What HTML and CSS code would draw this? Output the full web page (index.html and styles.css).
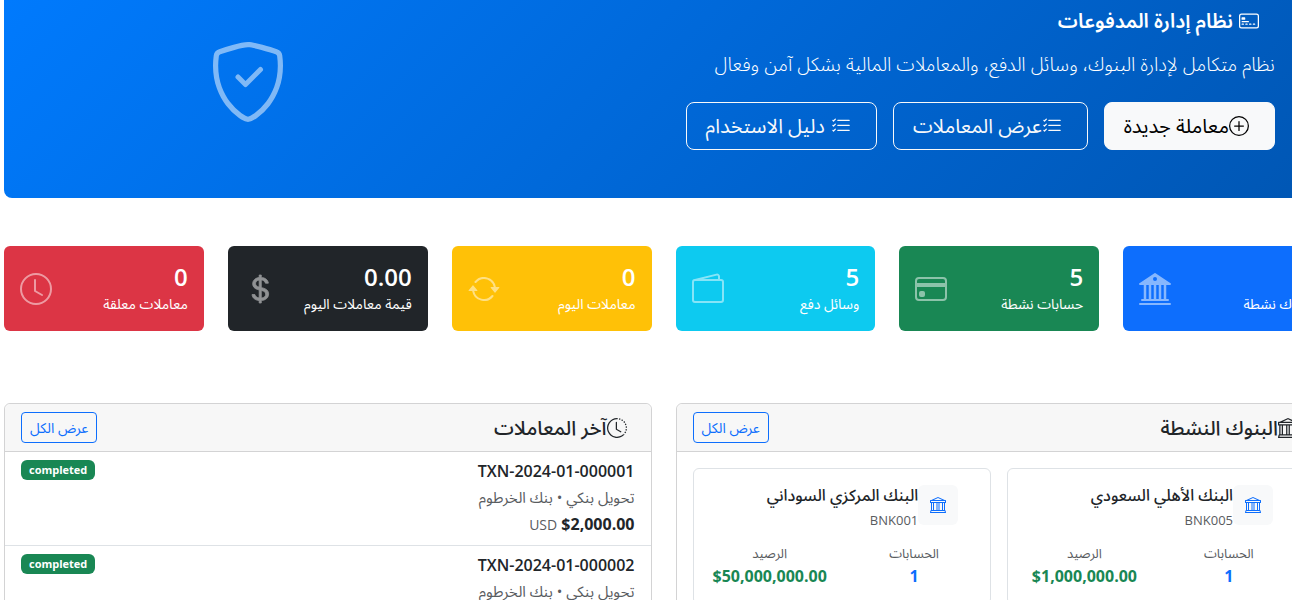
FILE: index.html
```html
<!DOCTYPE html>
<html lang="ar">
<head>
    <meta charset="UTF-8">
    <meta name="viewport" content="width=device-width, initial-scale=1.0">
    <title>نظام إدارة المدفوعات</title>
    <link rel="stylesheet" href="styles.css">
</head>
<body>
    <svg class="sprite" aria-hidden="true">
        <symbol id="card-front" viewBox="0 0 16 16">
            <path d="M14 3a1 1 0 0 1 1 1v8a1 1 0 0 1-1 1H2a1 1 0 0 1-1-1V4a1 1 0 0 1 1-1zM2 2a2 2 0 0 0-2 2v8a2 2 0 0 0 2 2h12a2 2 0 0 0 2-2V4a2 2 0 0 0-2-2z"/>
            <path d="M2 5.500a.5.5 0 0 1 .5-.5h2a.5.5 0 0 1 .5.5v1a.5.5 0 0 1-.5.5h-2a.5.5 0 0 1-.5-.5zm0 3a.5.5 0 0 1 .5-.5h5a.5.5 0 0 1 0 1h-5a.5.5 0 0 1-.5-.5m0 2a.5.5 0 0 1 .5-.5h1a.5.5 0 0 1 0 1h-1a.5.5 0 0 1-.5-.5m3 0a.5.5 0 0 1 .5-.5h1a.5.5 0 0 1 0 1h-1a.5.5 0 0 1-.5-.5m3 0a.5.5 0 0 1 .5-.5h1a.5.5 0 0 1 0 1h-1a.5.5 0 0 1-.5-.5m3 0a.5.5 0 0 1 .5-.5h1a.5.5 0 0 1 0 1h-1a.5.5 0 0 1-.5-.5"/>
        </symbol>
        <symbol id="plus-circle" viewBox="0 0 16 16">
            <path d="M8 15A7 7 0 1 1 8 1a7 7 0 0 1 0 14m0 1A8 8 0 1 0 8 0a8 8 0 0 0 0 16"/>
            <path d="M8 4a.5.5 0 0 1 .5.5v3h3a.5.5 0 0 1 0 1h-3v3a.5.5 0 0 1-1 0v-3h-3a.5.5 0 0 1 0-1h3v-3A.5.5 0 0 1 8 4"/>
        </symbol>
        <symbol id="list-check" viewBox="0 0 16 16">
            <path d="M5 11.500a.5.5 0 0 1 .5-.5h9a.5.5 0 0 1 0 1h-9a.5.5 0 0 1-.5-.5m0-4a.5.5 0 0 1 .5-.5h9a.5.5 0 0 1 0 1h-9a.5.5 0 0 1-.5-.5m0-4a.5.5 0 0 1 .5-.5h9a.5.5 0 0 1 0 1h-9a.5.5 0 0 1-.5-.5M3.854 2.146a.5.5 0 0 1 0 .708l-1.500 1.500a.5.5 0 0 1-.708 0l-.5-.5a.5.5 0 1 1 .708-.708L2 3.293l1.146-1.147a.5.5 0 0 1 .708 0m0 4a.5.5 0 0 1 0 .708l-1.500 1.500a.5.5 0 0 1-.708 0l-.5-.5a.5.5 0 1 1 .708-.708L2 7.293l1.146-1.147a.5.5 0 0 1 .708 0m0 4a.5.5 0 0 1 0 .708l-1.500 1.500a.5.5 0 0 1-.708 0l-.5-.5a.5.5 0 0 1 .708-.708l.146.147 1.146-1.147a.5.5 0 0 1 .708 0"/>
        </symbol>
        <symbol id="shield-check" viewBox="0 0 16 16">
            <path d="M5.338 1.590a61 61 0 0 0-2.837.856.480.480 0 0 0-.328.390c-.554 4.157.726 7.190 2.253 9.188a10.700 10.700 0 0 0 2.287 2.233c.346.244.652.420.893.533q.180.085.293.118a1 1 0 0 0 .101.025 1 1 0 0 0 .100-.025q.114-.034.294-.118c.240-.113.547-.290.893-.533a10.700 10.700 0 0 0 2.287-2.233c1.527-1.997 2.807-5.031 2.253-9.188a.480.480 0 0 0-.328-.390c-.651-.213-1.750-.560-2.837-.855C9.552 1.290 8.531 1.067 8 1.067c-.530 0-1.552.223-2.662.524zM5.072.560C6.157.265 7.310 0 8 0s1.843.265 2.928.560c1.110.300 2.229.655 2.887.870a1.540 1.540 0 0 1 1.044 1.262c.596 4.477-.787 7.795-2.465 9.990a11.800 11.800 0 0 1-2.517 2.453 7 7 0 0 1-1.048.625c-.280.132-.581.240-.829.240s-.548-.108-.829-.240a7 7 0 0 1-1.048-.625 11.800 11.800 0 0 1-2.517-2.453C1.928 10.487.545 7.169 1.141 2.692A1.540 1.540 0 0 1 2.185 1.430 63 63 0 0 1 5.072.560"/>
            <path d="M10.854 5.146a.5.5 0 0 1 0 .708l-3 3a.5.5 0 0 1-.708 0l-1.500-1.500a.5.5 0 1 1 .708-.708L7.500 7.793l2.646-2.647a.5.5 0 0 1 .708 0"/>
        </symbol>
        <symbol id="bank" viewBox="0 0 16 16">
            <path d="m8 0 6.610 3h.890a.5.5 0 0 1 .5.5v2a.5.5 0 0 1-.5.5H15v7a.5.5 0 0 1 .485.380l.5 2a.498.498 0 0 1-.485.620H.5a.498.498 0 0 1-.485-.620l.5-2A.5.5 0 0 1 1 13V6H.5a.5.5 0 0 1-.5-.5v-2A.5.5 0 0 1 .5 3h.890zM3.777 3h8.447L8 1zM2 6v7h1V6zm2 0v7h2.500V6zm3.500 0v7h1V6zm2 0v7H12V6zM13 6v7h1V6zm2-1V4H1v1zm-.390 9H1.390l-.250 1h13.720z"/>
        </symbol>
        <symbol id="bank-fill" viewBox="0 0 16 16">
            <path d="M8.277.084a.5.5 0 0 0-.554 0l-7.500 5A.5.5 0 0 0 .5 6h1.875v7H1.500a.5.5 0 0 0 0 1h13a.5.5 0 1 0 0-1h-.875V6H15.500a.5.5 0 0 0 .277-.916zM12.375 6v7h-1.250V6zm-2.500 0v7h-1.250V6zm-2.500 0v7h-1.250V6zm-2.500 0v7h-1.250V6zM8 4a1 1 0 1 1 0-2 1 1 0 0 1 0 2M.5 15a.5.5 0 0 0 0 1h15a.5.5 0 1 0 0-1z"/>
        </symbol>
        <symbol id="credit-card" viewBox="0 0 16 16">
            <path d="M0 4a2 2 0 0 1 2-2h12a2 2 0 0 1 2 2v8a2 2 0 0 1-2 2H2a2 2 0 0 1-2-2zm2-1a1 1 0 0 0-1 1v1h14V4a1 1 0 0 0-1-1zm13 4H1v5a1 1 0 0 0 1 1h12a1 1 0 0 0 1-1z"/>
            <path d="M2 10a1 1 0 0 1 1-1h1a1 1 0 0 1 1 1v1a1 1 0 0 1-1 1H3a1 1 0 0 1-1-1z"/>
        </symbol>
        <symbol id="wallet" viewBox="0 0 16 16">
            <path d="M12.136.326A1.500 1.500 0 0 1 14 1.780V3h.5A1.500 1.500 0 0 1 16 4.500v9a1.500 1.500 0 0 1-1.500 1.500h-13A1.500 1.500 0 0 1 0 13.500v-9a1.500 1.500 0 0 1 1.432-1.499zM5.562 3H13V1.780a.5.5 0 0 0-.621-.484zM1.500 4a.5.5 0 0 0-.5.5v9a.5.5 0 0 0 .5.5h13a.5.5 0 0 0 .5-.5v-9a.5.5 0 0 0-.5-.5z"/>
        </symbol>
        <symbol id="repeat" viewBox="0 0 16 16">
            <path d="M11.534 7h3.932a.250.250 0 0 1 .192.410l-1.966 2.360a.250.250 0 0 1-.384 0l-1.966-2.360a.250.250 0 0 1 .192-.410m-11 2h3.932a.250.250 0 0 0 .192-.410L2.692 6.230a.250.250 0 0 0-.384 0L.342 8.590A.250.250 0 0 0 .534 9"/>
            <path d="M8 3c-1.552 0-2.940.707-3.857 1.818a.5.5 0 1 1-.771-.636A6.002 6.002 0 0 1 13.917 7H12.900A5 5 0 0 0 8 3M3.100 9a5.002 5.002 0 0 0 8.757 2.182.5.5 0 1 1 .771.636A6.002 6.002 0 0 1 2.083 9z"/>
        </symbol>
        <symbol id="dollar" viewBox="0 0 16 16">
            <path stroke="currentColor" stroke-width="0.4" d="M4 10.781c.148 1.667 1.513 2.850 3.591 3.003V15h1.043v-1.216c2.270-.179 3.678-1.438 3.678-3.300 0-1.590-.947-2.510-2.956-3.028l-.722-.187V3.467c1.122.110 1.879.714 2.070 1.616h1.470c-.166-1.600-1.540-2.748-3.540-2.875V1H7.591v1.233c-1.939.230-3.270 1.472-3.270 3.156 0 1.454.966 2.483 2.661 2.917l.610.162v4.031c-1.149-.170-1.940-.800-2.131-1.718zm3.391-3.836c-1.043-.263-1.600-.825-1.600-1.616 0-.944.704-1.641 1.800-1.828v3.495l-.2-.050zm1.591 1.872c1.287.323 1.852.859 1.852 1.769 0 1.097-.826 1.828-2.200 1.939V8.730z"/>
        </symbol>
        <symbol id="clock" viewBox="0 0 16 16">
            <path d="M8 3.500a.5.5 0 0 0-1 0V9a.5.5 0 0 0 .252.434l3.500 2a.5.5 0 0 0 .496-.868L8 8.710z"/>
            <path d="M8 16A8 8 0 1 0 8 0a8 8 0 0 0 0 16m7-8A7 7 0 1 1 1 8a7 7 0 0 1 14 0"/>
        </symbol>
        <symbol id="clock-history" viewBox="0 0 16 16">
            <path d="M8.515 1.019A7 7 0 0 0 8 1V0a8 8 0 0 1 .589.022zm2.004.450a7 7 0 0 0-.985-.299l.219-.976q.576.129 1.126.342zm1.370.710a7 7 0 0 0-.439-.270l.493-.870a8 8 0 0 1 .979.654l-.615.789a7 7 0 0 0-.418-.302zm1.834 1.790a7 7 0 0 0-.653-.796l.724-.690q.406.429.747.910zm.744 1.352a7 7 0 0 0-.214-.468l.893-.450a8 8 0 0 1 .450 1.088l-.950.313a7 7 0 0 0-.179-.483m.530 2.507a7 7 0 0 0-.100-1.025l.985-.170q.100.580.116 1.170zm-.131 1.538q.050-.254.081-.510l.993.123a8 8 0 0 1-.230 1.155l-.964-.267q.069-.247.120-.501m-.952 2.379q.276-.436.486-.908l.914.405q-.240.540-.555 1.038zm-.964 1.205q.183-.183.350-.378l.758.653a8 8 0 0 1-.401.432z"/>
            <path d="M8 1a7 7 0 1 0 4.950 11.950l.707.707A8.001 8.001 0 1 1 8 0z"/>
            <path d="M7.500 3a.5.5 0 0 1 .5.5v5.210l3.248 1.856a.5.5 0 0 1-.496.868l-3.500-2A.5.5 0 0 1 7 9V3.500a.5.5 0 0 1 .5-.5"/>
        </symbol>
    </svg>

    <div class="page">
        <section class="hero">
            <div class="hero-text">
                <h1><svg class="icon"><use href="#card-front"/></svg> <span>نظام إدارة المدفوعات</span></h1>
                <p>نظام متكامل لإدارة البنوك، وسائل الدفع، والمعاملات المالية بشكل آمن وفعال</p>
                <div class="hero-actions">
                    <a href="#new" class="btn btn-light"><svg class="icon"><use href="#plus-circle"/></svg>معاملة جديدة</a>
                    <a href="#transactions" class="btn btn-outline"><svg class="icon"><use href="#list-check"/></svg>عرض المعاملات</a>
                    <a href="#guide" class="btn btn-outline btn-guide"><svg class="icon"><use href="#list-check"/></svg>دليل الاستخدام</a>
                </div>
            </div>
            <div class="hero-icon">
                <svg><use href="#shield-check"/></svg>
            </div>
        </section>

        <section class="stats">
            <div class="stat blue">
                <div><h2>5</h2><p>بنوك نشطة</p></div>
                <svg><use href="#bank-fill"/></svg>
            </div>
            <div class="stat green">
                <div><h2>5</h2><p>حسابات نشطة</p></div>
                <svg><use href="#credit-card"/></svg>
            </div>
            <div class="stat cyan">
                <div><h2>5</h2><p>وسائل دفع</p></div>
                <svg><use href="#wallet"/></svg>
            </div>
            <div class="stat yellow">
                <div><h2>0</h2><p>معاملات اليوم</p></div>
                <svg><use href="#repeat"/></svg>
            </div>
            <div class="stat dark">
                <div><h2>0.00</h2><p>قيمة معاملات اليوم</p></div>
                <svg><use href="#dollar"/></svg>
            </div>
            <div class="stat red">
                <div><h2>0</h2><p>معاملات معلقة</p></div>
                <svg><use href="#clock"/></svg>
            </div>
        </section>

        <div class="panels">
            <section class="panel">
                <header class="panel-header">
                    <h2><svg class="icon"><use href="#bank"/></svg>البنوك النشطة</h2>
                    <a href="#banks" class="btn-small">عرض الكل</a>
                </header>
                <div class="banks">
                    <article class="bank">
                        <div class="bank-head">
                            <span class="bank-icon"><svg><use href="#bank"/></svg></span>
                            <div>
                                <h3>البنك الأهلي السعودي</h3>
                                <small>BNK005</small>
                            </div>
                        </div>
                        <div class="bank-stats">
                            <div><small>الحسابات</small><strong class="count">1</strong></div>
                            <div><small>الرصيد</small><strong class="balance" dir="ltr">$1,000,000.00</strong></div>
                        </div>
                    </article>
                    <article class="bank">
                        <div class="bank-head">
                            <span class="bank-icon"><svg><use href="#bank"/></svg></span>
                            <div>
                                <h3>البنك المركزي السوداني</h3>
                                <small>BNK001</small>
                            </div>
                        </div>
                        <div class="bank-stats">
                            <div><small>الحسابات</small><strong class="count">1</strong></div>
                            <div><small>الرصيد</small><strong class="balance" dir="ltr">$50,000,000.00</strong></div>
                        </div>
                    </article>
                </div>
            </section>

            <section class="panel">
                <header class="panel-header">
                    <h2><svg class="icon"><use href="#clock-history"/></svg>آخر المعاملات</h2>
                    <a href="#transactions" class="btn-small">عرض الكل</a>
                </header>
                <ul class="transactions">
                    <li>
                        <div class="transaction">
                            <h3>TXN-2024-01-000001</h3>
                            <p>تحويل بنكي • بنك الخرطوم</p>
                            <div class="amount"><strong dir="ltr">$2,000.00</strong> <small>USD</small></div>
                        </div>
                        <span class="badge">completed</span>
                    </li>
                    <li>
                        <div class="transaction">
                            <h3>TXN-2024-01-000002</h3>
                            <p>تحويل بنكي • بنك الخرطوم</p>
                        </div>
                        <span class="badge">completed</span>
                    </li>
                </ul>
            </section>
        </div>
    </div>
</body>
</html>
```

FILE: styles.css
```css
* {
    box-sizing: border-box;
}
html {
    overflow: hidden;
}
body {
    font-family: "Open Sans", "Noto Sans Arabic", "DejaVu Sans Condensed", "DejaVu Sans", sans-serif;
    font-size: 16px;
    line-height: 24px;
    margin: 0;
    color: #212529;
    background-color: #fff;
}
h1, h2, h3, p, ul {
    margin: 0;
    padding: 0;
}
a {
    text-decoration: none;
}
svg {
    fill: currentColor;
    flex-shrink: 0;
}
.sprite {
    display: none;
}
.icon {
    width: 20px;
    height: 20px;
    margin-right: 8px;
}
/* the content is wider than the window and runs past its right edge */
.page {
    margin: -40px -31px 0 4px;
}

/* Hero */
.hero {
    direction: rtl;
    display: grid;
    grid-template-columns: 2fr 1fr;
    padding: 48px 36px;
    border-radius: 8px;
    color: #fff;
    background: linear-gradient(135deg, #007bff 0%, #0056b3 100%);
}
.hero-text {
    padding: 0 12px;
}
.hero h1 {
    display: flex;
    align-items: center;
    gap: 6px;
    font-size: 20px;
    font-weight: 600;
    line-height: 26px;
    margin-bottom: 16px;
    padding-right: 8px;
}
.hero p {
    font-size: 19px;
    font-weight: 300;
    line-height: 28px;
    margin-bottom: 24px;
}
.hero-actions {
    display: flex;
    gap: 16px;
}
.btn {
    display: flex;
    align-items: center;
    padding: 8px 17px 8px 19px;
    border: 1px solid #f8f9fa;
    border-radius: 8px;
    font-size: 20px;
    line-height: 30px;
    white-space: nowrap;
}
.btn-light {
    color: #000;
    background-color: #f8f9fa;
}
.btn-outline {
    color: #f8f9fa;
}
.btn-guide {
    gap: 6px;
}
.hero-icon {
    display: flex;
    align-items: center;
    justify-content: center;
    padding-top: 6px;
    opacity: 0.5;
}
.hero-icon svg {
    width: 80px;
    height: 80px;
}

/* Stats */
.stats {
    direction: rtl;
    display: grid;
    grid-template-columns: repeat(6, 1fr);
    gap: 24px;
    margin: 48px 0 72px;
}
.stat {
    display: flex;
    align-items: center;
    justify-content: space-between;
    padding: 16px;
    border-radius: 6px;
    color: #fff;
    white-space: nowrap;
}
.stat h2 {
    font-size: 24px;
    font-weight: 600;
    line-height: 30px;
}
.stat p {
    font-size: 14px;
    line-height: 23px;
}
.stat svg {
    width: 32px;
    height: 32px;
    opacity: 0.5;
}
.blue { background-color: #0d6efd; }
.green { background-color: #198754; }
.cyan { background-color: #0dcaf0; }
.yellow { background-color: #ffc107; }
.dark { background-color: #212529; }
.red { background-color: #dc3545; }

/* Panels */
.panels {
    direction: rtl;
    display: grid;
    grid-template-columns: 1fr 1fr;
    gap: 24px;
}
.panel {
    border: 1px solid #d3d3d4;
    border-radius: 6px;
}
.panel-header {
    display: flex;
    align-items: center;
    justify-content: space-between;
    padding: 8px 16px;
    border-bottom: 1px solid #d3d3d4;
    border-radius: 6px 6px 0 0;
    background-color: #f7f7f7;
}
.panel-header h2 {
    display: flex;
    align-items: center;
    font-size: 20px;
    font-weight: 500;
    line-height: 24px;
}
.btn-small {
    padding: 4px 8px;
    border: 1px solid #0d6efd;
    border-radius: 4px;
    color: #0d6efd;
    font-size: 14px;
    line-height: 21px;
}
small {
    color: #595c5f;
    font-size: 14px;
}

/* Banks */
.banks {
    display: grid;
    grid-template-columns: 1fr 1fr;
    gap: 16px;
    padding: 16px;
}
.bank {
    padding: 16px;
    border: 1px solid #dee2e6;
    border-radius: 6px;
}
.bank small {
    display: block;
    font-size: 13px;
    line-height: 22px;
}
.bank-head {
    display: flex;
    margin-bottom: 11px;
}
.bank-icon {
    display: flex;
    align-items: center;
    justify-content: center;
    width: 40px;
    height: 40px;
    margin-right: 16px;
    border-radius: 6px;
    color: #0d6efd;
    background-color: #f8f9fa;
}
.bank-icon svg {
    width: 16px;
    height: 16px;
}
.bank h3 {
    font-size: 16px;
    font-weight: 500;
    line-height: 20px;
    margin-bottom: 4px;
    white-space: nowrap;
}
.bank-stats {
    display: grid;
    grid-template-columns: 1fr 1fr;
    margin: 0 -12px;
    text-align: center;
}
.bank-stats strong {
    display: block;
}
.count {
    color: #0d6efd;
}
.balance {
    color: #198754;
}

/* Transactions */
.transactions {
    list-style: none;
}
.transactions li {
    display: flex;
    align-items: flex-start;
    justify-content: space-between;
    padding: 8px 16px;
    border-bottom: 1px solid #dee2e6;
}
.transaction {
    display: flex;
    flex-direction: column;
    gap: 3px;
}
.transaction h3 {
    font-size: 16px;
    font-weight: 600;
    line-height: 22px;
}
.transaction p {
    color: #595c5f;
    font-size: 15px;
}
.badge {
    padding: 4px 8px;
    border-radius: 6px;
    color: #fff;
    background-color: #198754;
    font-size: 11px;
    font-weight: 700;
    line-height: 12px;
}
```
